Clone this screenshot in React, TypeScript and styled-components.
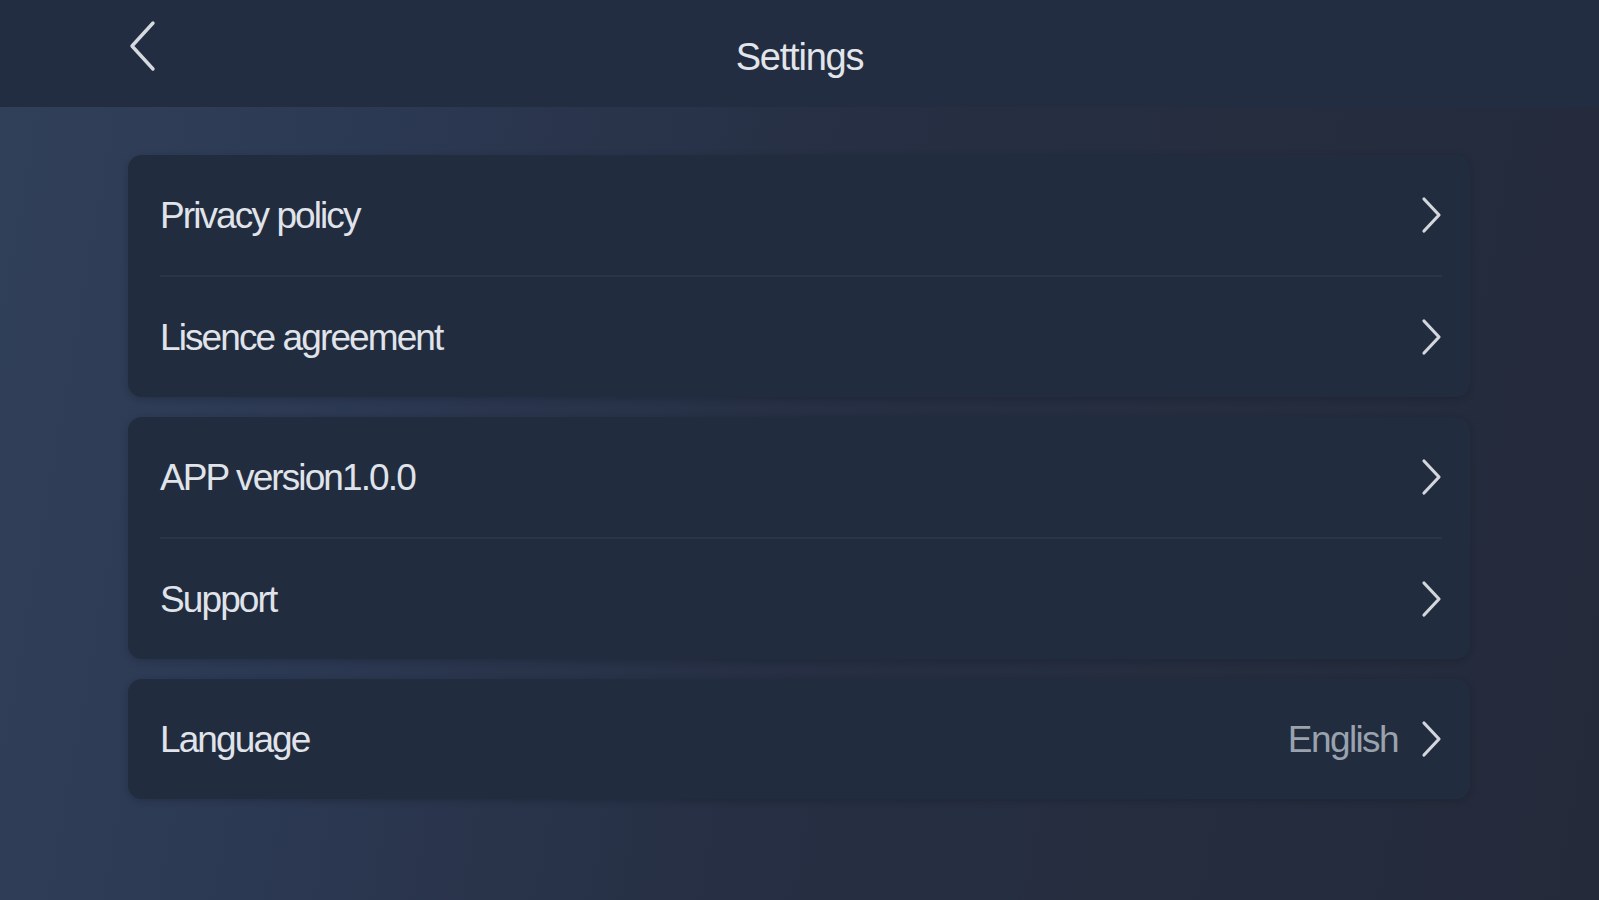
import React from "react";
import styled, { createGlobalStyle } from "styled-components";

const GlobalStyle = createGlobalStyle`
  html, body {
    margin: 0;
    padding: 0;
    background: #242a3a;
  }
  * { box-sizing: border-box; }
`;

const Page = styled.div`
  width: 100%;
  height: 100vh;
  display: flex;
  flex-direction: column;
  font-family: "Liberation Sans", Arial, sans-serif;
  color: #dde1e7;
  background: linear-gradient(100deg, #314059 0%, #2c3953 22%, #262f43 50%, #242a3a 100%);
  overflow: hidden;
`;

const Header = styled.header`
  height: 107px;
  flex: none;
  display: grid;
  grid-template-columns: 1fr auto 1fr;
  align-items: center;
  padding: 0 127px;
  background: #222d41;
`;

const BackButton = styled.button`
  justify-self: start;
  width: 30px;
  height: 52px;
  margin-bottom: 16px;
  padding: 0;
  border: none;
  background: transparent;
  display: flex;
  align-items: center;
  justify-content: center;
  cursor: pointer;
`;

const Title = styled.h1`
  margin: 6px 0 0;
  font-size: 38px;
  font-weight: 400;
  letter-spacing: -1.2px;
  color: #e2e5ea;
  line-height: 1;
`;

const Content = styled.main`
  flex: 1;
  display: flex;
  flex-direction: column;
  gap: 20px;
  padding: 48px 129px 0 128px;
`;

const Card = styled.section`
  display: flex;
  flex-direction: column;
  background: #212c3f;
  border-radius: 14px;
  box-shadow: 0 2px 6px rgba(15, 20, 30, 0.25);
`;

const Row = styled.div`
  height: 120px;
  display: flex;
  align-items: center;
  padding: 0 28px 0 32px;
  cursor: pointer;
`;

const Divider = styled.div`
  height: 2px;
  margin: 0 28px 0 32px;
  background: #2a3548;
`;

const Label = styled.span`
  flex: 1;
  font-size: 37px;
  letter-spacing: -1.9px;
  color: #e0e4ea;
  line-height: 1;
`;

const Value = styled.span`
  font-size: 37px;
  letter-spacing: -1.6px;
  color: #9aa2ae;
  margin-right: 22px;
  line-height: 1;
`;

const Chevron = () => (
  <svg width="22" height="40" viewBox="0 0 22 40" fill="none">
    <path d="M4 4 L19 20 L4 36" stroke="#d3d7dd" strokeWidth="3.2" strokeLinecap="round" strokeLinejoin="round" />
  </svg>
);

const BackIcon = () => (
  <svg width="30" height="52" viewBox="0 0 30 52" fill="none">
    <path d="M26 3 L5 26 L26 49" stroke="#d6dae0" strokeWidth="3.4" strokeLinecap="round" strokeLinejoin="round" />
  </svg>
);

type Item = { label: string; value?: string };

const groups: Item[][] = [
  [{ label: "Privacy policy" }, { label: "Lisence agreement" }],
  [{ label: "APP version1.0.0" }, { label: "Support" }],
  [{ label: "Language", value: "English" }],
];

export default function App() {
  return (
    <>
      <GlobalStyle />
      <Page>
        <Header>
          <BackButton aria-label="Back">
            <BackIcon />
          </BackButton>
          <Title>Settings</Title>
          <div />
        </Header>
        <Content>
          {groups.map((group, gi) => (
            <Card key={gi}>
              {group.map((item, ii) => (
                <React.Fragment key={item.label}>
                  {ii > 0 && <Divider />}
                  <Row>
                    <Label>{item.label}</Label>
                    {item.value && <Value>{item.value}</Value>}
                    <Chevron />
                  </Row>
                </React.Fragment>
              ))}
            </Card>
          ))}
        </Content>
      </Page>
    </>
  );
}
